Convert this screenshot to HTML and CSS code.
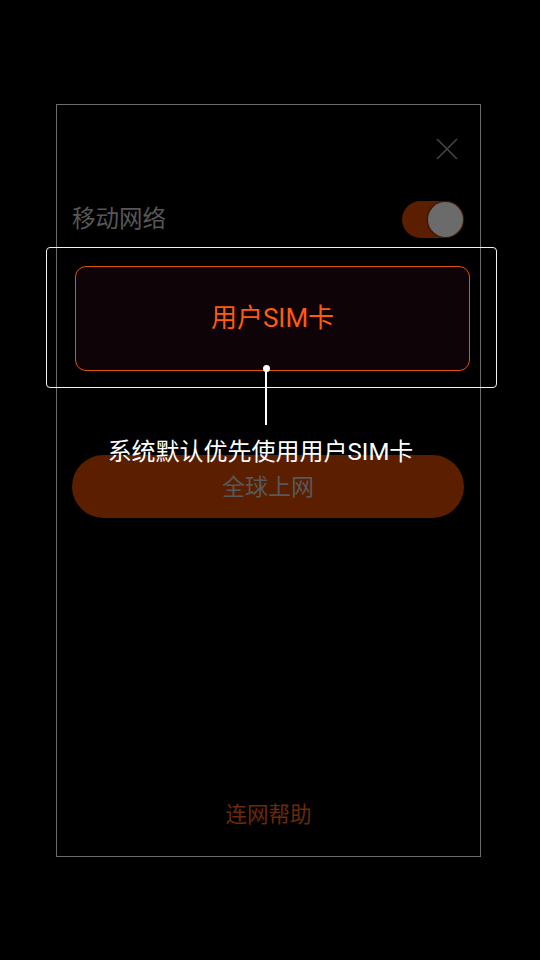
FILE: index.html
```html
<!DOCTYPE html>
<html lang="zh-CN">
<head>
<meta charset="utf-8">
<link rel="stylesheet" href="styles.css">
</head>
<body>
<div class="page">
  <div class="card">
    <div class="close-row">
      <svg class="close" width="22" height="22" viewBox="0 0 22 22"><path d="M1 1L21 21M21 1L1 21" stroke="#454545" stroke-width="1.6" fill="none"/></svg>
    </div>
    <div class="net-row">
      <span class="net-label">移动网络</span>
      <span class="toggle"><span class="thumb"></span></span>
    </div>
    <div class="option">用户SIM卡</div>
    <div class="global-btn">全球上网</div>
    <div class="help">连网帮助</div>
  </div>
  <div class="frame"></div>
  <div class="tip">
    <span class="dot"></span>
    <span class="stem"></span>
    <span class="tip-text">系统默认优先使用用户SIM卡</span>
  </div>
</div>
</body>
</html>
```
FILE: styles.css
```css
html, body {
  margin: 0;
  padding: 0;
  background: #000;
}
body {
  font-family: Roboto, "Noto Sans CJK SC", "Noto Sans", sans-serif;
}
.page {
  position: relative;
  width: 540px;
  height: 960px;
  padding-top: 104px;
  box-sizing: border-box;
}
.card {
  margin-left: 56px;
  width: 425px;
  height: 753px;
  box-sizing: border-box;
  border: 1px solid #6c6c6c;
  display: flex;
  flex-direction: column;
}
.close-row {
  display: flex;
  justify-content: flex-end;
  margin-top: 33px;
  padding-right: 22px;
}
.close {
  display: block;
}
.net-row {
  margin-top: 41px;
  padding: 0 16px 0 15px;
  display: flex;
  align-items: center;
  justify-content: space-between;
  height: 37px;
}
.net-label {
  font-size: 23.5px;
  color: #575757;
  line-height: 30px;
  margin-top: -1px;
}
.toggle {
  width: 62px;
  height: 37px;
  border-radius: 19px;
  background: #5b1e00;
  display: flex;
  align-items: center;
  justify-content: flex-end;
  padding: 0 1px;
  box-sizing: border-box;
}
.thumb {
  width: 35px;
  height: 35px;
  border-radius: 50%;
  background: #6b6b6b;
  box-shadow: 0 0 1px 1px #3a1404;
}
.option {
  margin: 28px 10px 0 18px;
  height: 105px;
  box-sizing: border-box;
  border: 1.5px solid #e2520f;
  border-radius: 11px;
  background: #0e0408;
  color: #ff5a10;
  font-size: 26px;
  padding-bottom: 7px;
  display: flex;
  align-items: center;
  justify-content: center;
}
.global-btn {
  margin: 84px 16px 0 15px;
  height: 63px;
  border-radius: 32px;
  background: #5b1f00;
  color: #585858;
  font-size: 23px;
  padding-bottom: 4px;
  box-sizing: border-box;
  display: flex;
  align-items: center;
  justify-content: center;
}
.help {
  margin-top: auto;
  margin-bottom: 26px;
  text-align: center;
  line-height: 30px;
  font-size: 21.5px;
  color: #6a2a0b;
}
.frame {
  position: absolute;
  left: 46px;
  top: 247px;
  width: 451px;
  height: 141px;
  box-sizing: border-box;
  border: 1px solid #f2f2f2;
  border-radius: 4px;
}
.tip {
  position: absolute;
  left: 0;
  top: 365px;
  width: 532px;
  display: flex;
  flex-direction: column;
  align-items: center;
}
.dot {
  width: 7px;
  height: 7px;
  border-radius: 50%;
  background: #fff;
}
.stem {
  width: 2px;
  height: 56px;
  margin-top: -3px;
  background: #fff;
}
.tip-text {
  margin-top: 12px;
  margin-right: 11px;
  font-size: 24px;
  line-height: 30px;
  color: #fff;
}
```
